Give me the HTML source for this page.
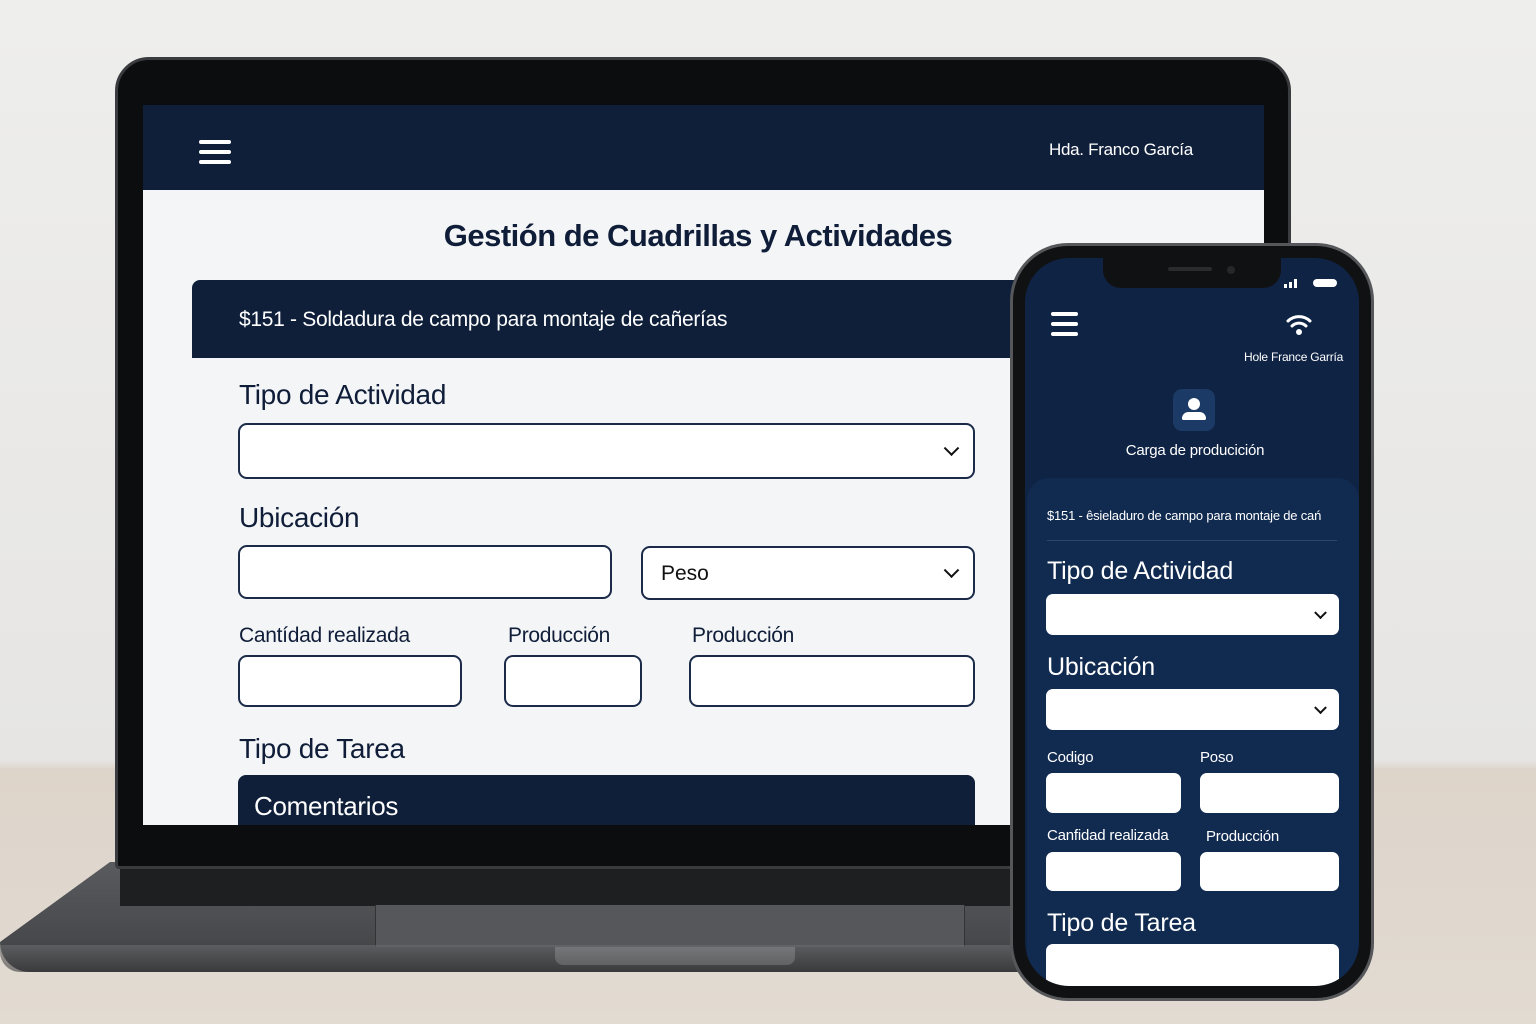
<!DOCTYPE html>
<html><head><meta charset="utf-8"><style>
*{margin:0;padding:0;box-sizing:border-box}
body{width:1536px;height:1024px;overflow:hidden;position:relative;font-family:"Liberation Sans",sans-serif;background:linear-gradient(#eeeeed 0,#e6e5e3 760px,#ddd4ca 770px,#e2dbd2 1024px)}
.a{position:absolute}
.in{background:#fff;border:2px solid #1a2a48;border-radius:9px}
.lbl{color:#0f1d38;letter-spacing:-0.3px}
.chev{position:absolute;right:16px;top:50%;width:11px;height:11px;border-right:2.5px solid #111;border-bottom:2.5px solid #111;transform:translateY(-75%) rotate(45deg)}
.pin{background:#fff;border-radius:7px}
.pl{color:#fff;letter-spacing:-0.2px}
</style></head><body>
<!-- laptop base -->
<div class="a" style="left:0;top:862px;width:1020px;height:110px;background:linear-gradient(#5a5b5e,#48494c 70%,#3a3b3d);border-radius:60px 0 0 30px/80px 0 0 30px;clip-path:polygon(110px 0,1020px 0,1020px 100%,0 100%,0 80px)"></div>
<div class="a" style="left:120px;top:868px;width:900px;height:38px;background:#1e1f21"></div>
<div class="a" style="left:375px;top:905px;width:590px;height:42px;background:#56575a;border-left:1px solid #333;border-right:1px solid #333"></div>
<div class="a" style="left:555px;top:947px;width:240px;height:18px;background:#8a8b8e;border-radius:0 0 8px 8px"></div>
<div class="a" style="left:0;top:945px;width:1020px;height:27px;background:linear-gradient(#6b6c6f,#3a3a3c);border-radius:0 0 0 20px;opacity:.6"></div>
<!-- lid -->
<div class="a" style="left:115px;top:57px;width:1176px;height:812px;background:#0c0d0f;border-radius:34px 34px 4px 4px;border:3px solid #3a3b3e"></div>
<div class="a" style="left:143px;top:105px;width:1121px;height:720px;background:#f4f5f7;overflow:hidden">
 <div class="a" style="left:0;top:0;width:100%;height:85px;background:#0f1f3a"></div>
 <div class="a" style="left:56px;top:35px;width:32px;height:4px;background:#fff;border-radius:2px;box-shadow:0 10px 0 #fff,0 20px 0 #fff"></div>
 <div class="a" style="left:906px;top:35px;color:#fff;font-size:17px;letter-spacing:-0.3px">Hda. Franco García</div>
 <div class="a" style="left:0;top:113px;width:1110px;text-align:center;font-size:31px;font-weight:bold;color:#0f1d38;letter-spacing:-0.5px">Gestión de Cuadrillas y Actividades</div>
 <div class="a" style="left:49px;top:175px;width:830px;height:78px;background:#0f1f3a;border-radius:8px 8px 0 0"></div>
 <div class="a" style="left:96px;top:203px;color:#fff;font-size:21px;letter-spacing:-0.3px">$151 - Soldadura de campo para montaje de cañerías</div>
 <div class="a lbl" style="left:96px;top:274px;font-size:28px">Tipo de Actividad</div>
 <div class="a in" style="left:95px;top:318px;width:737px;height:56px"><i class="chev"></i></div>
 <div class="a lbl" style="left:96px;top:397px;font-size:28px">Ubicación</div>
 <div class="a in" style="left:95px;top:440px;width:374px;height:54px"></div>
 <div class="a in" style="left:498px;top:441px;width:334px;height:54px"><span style="position:absolute;left:18px;top:14px;font-size:21px;color:#111">Peso</span><i class="chev"></i></div>
 <div class="a lbl" style="left:96px;top:519px;font-size:21px">Cantídad realizada</div>
 <div class="a lbl" style="left:365px;top:519px;font-size:21px">Producción</div>
 <div class="a lbl" style="left:549px;top:519px;font-size:21px">Producción</div>
 <div class="a in" style="left:95px;top:550px;width:224px;height:52px"></div>
 <div class="a in" style="left:361px;top:550px;width:138px;height:52px"></div>
 <div class="a in" style="left:546px;top:550px;width:286px;height:52px"></div>
 <div class="a lbl" style="left:96px;top:628px;font-size:28px">Tipo de Tarea</div>
 <div class="a" style="left:95px;top:670px;width:737px;height:60px;background:#0f1f3a;border-radius:8px 8px 0 0"></div>
 <div class="a" style="left:111px;top:686px;color:#fff;font-size:26px;letter-spacing:-0.3px">Comentarios</div>
</div>
<!-- phone -->
<div class="a" style="left:1010px;top:243px;width:364px;height:758px;background:#101113;border-radius:58px;border:3px solid #55575b"></div>
<div class="a" style="left:1025px;top:258px;width:334px;height:728px;background:#0f2344;border-radius:44px;overflow:hidden">
 <div class="a" style="left:78px;top:0;width:178px;height:30px;background:#101113;border-radius:0 0 18px 18px"></div>
 <div class="a" style="left:143px;top:9px;width:44px;height:4px;background:#2a2b2e;border-radius:2px"></div>
 <div class="a" style="left:202px;top:8px;width:8px;height:8px;background:#26272a;border-radius:50%"></div>
 <div class="a" style="left:259px;top:26px;width:3px;height:4px;background:#fff"></div>
 <div class="a" style="left:264px;top:24px;width:3px;height:6px;background:#fff"></div>
 <div class="a" style="left:269px;top:21px;width:3px;height:9px;background:#fff"></div>
 <div class="a" style="left:288px;top:21px;width:24px;height:8px;background:#fff;border-radius:4px"></div>
 <div class="a" style="left:26px;top:54px;width:27px;height:4px;background:#fff;border-radius:2px;box-shadow:0 10px 0 #fff,0 20px 0 #fff"></div>
 <svg class="a" style="left:260px;top:54px" width="28" height="26" viewBox="0 0 28 26"><path d="M3 9a16 16 0 0 1 22 0M7 14a10 10 0 0 1 14 0" stroke="#fff" stroke-width="3" fill="none" stroke-linecap="round"/><circle cx="14" cy="20" r="3" fill="#fff"/></svg>
 <div class="a pl" style="left:219px;top:92px;font-size:12px">Hole France Garría</div>
 <div class="a" style="left:148px;top:131px;width:42px;height:42px;background:#1c3a66;border-radius:9px"></div>
 <div class="a" style="left:163px;top:140px;width:12px;height:12px;background:#fff;border-radius:50%"></div>
 <div class="a" style="left:157px;top:154px;width:24px;height:8px;background:#fff;border-radius:8px 8px 2px 2px"></div>
 <div class="a pl" style="left:0;top:184px;width:340px;text-align:center;font-size:15px">Carga de producición</div>
 <div class="a" style="left:2px;top:220px;width:332px;height:520px;background:#112a50;border-radius:22px 22px 0 0"></div>
 <div class="a pl" style="left:22px;top:250px;font-size:13px">$151 - êsieladuro de campo para montaje de cań</div>
 <div class="a" style="left:22px;top:282px;width:290px;height:1px;background:#2b4570"></div>
 <div class="a pl" style="left:22px;top:299px;font-size:25px">Tipo de Actividad</div>
 <div class="a pin" style="left:21px;top:336px;width:293px;height:41px"><i class="chev" style="right:14px;width:9px;height:9px;border-width:2px"></i></div>
 <div class="a pl" style="left:22px;top:395px;font-size:25px">Ubicación</div>
 <div class="a pin" style="left:21px;top:431px;width:293px;height:41px"><i class="chev" style="right:14px;width:9px;height:9px;border-width:2px"></i></div>
 <div class="a pl" style="left:22px;top:491px;font-size:15px">Codigo</div>
 <div class="a pl" style="left:175px;top:491px;font-size:15px">Poso</div>
 <div class="a pin" style="left:21px;top:515px;width:135px;height:40px"></div>
 <div class="a pin" style="left:175px;top:515px;width:139px;height:40px"></div>
 <div class="a pl" style="left:22px;top:569px;font-size:15px">Canfidad realizada</div>
 <div class="a pl" style="left:181px;top:570px;font-size:15px">Producción</div>
 <div class="a pin" style="left:21px;top:594px;width:135px;height:39px"></div>
 <div class="a pin" style="left:175px;top:594px;width:139px;height:39px"></div>
 <div class="a pl" style="left:22px;top:651px;font-size:25px">Tipo de Tarea</div>
 <div class="a pin" style="left:21px;top:686px;width:293px;height:50px"></div>
</div>
</body></html>
